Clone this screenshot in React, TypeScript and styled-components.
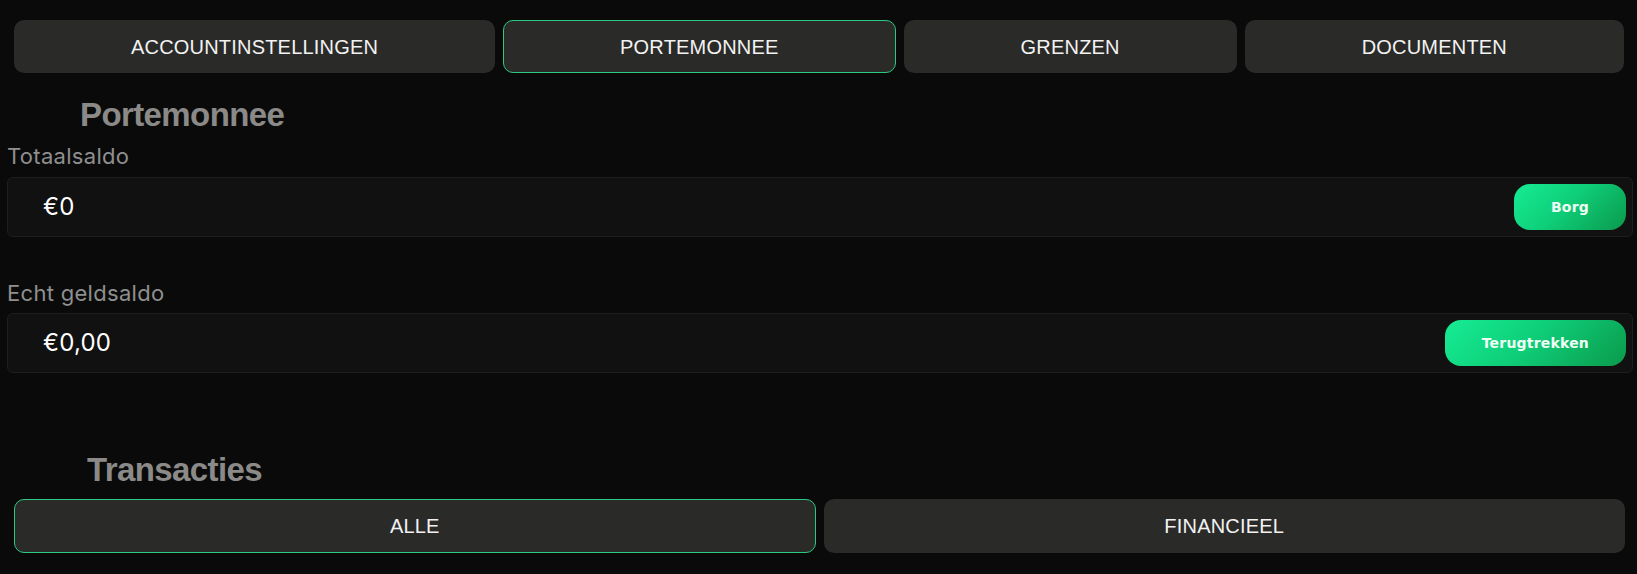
import styled, { createGlobalStyle, css } from 'styled-components';

const GlobalStyle = createGlobalStyle`
  html, body {
    margin: 0;
    padding: 0;
    background: #0a0a0a;
  }
  * {
    box-sizing: border-box;
  }
`;

const Page = styled.div`
  padding: 20px 4px 20px 7px;
  display: flex;
  flex-direction: column;
`;

const TabRow = styled.div<{ $top?: number; $right?: number }>`
  display: flex;
  gap: 8px;
  margin: ${p => p.$top ?? 0}px ${p => p.$right ?? 9}px 0 7px;
`;

const Tab = styled.button<{ $active?: boolean; $grow?: 'auto' | 'equal'; $height?: number }>`
  flex: ${p => (p.$grow === 'equal' ? '1 1 0' : '1 1 auto')};
  height: ${p => p.$height ?? 53}px;
  padding: 0;
  border-radius: 10px;
  border: 1px solid transparent;
  background: #2a2a29;
  color: #f2f2f2;
  font-family: 'Liberation Sans', Arial, sans-serif;
  font-size: 20px;
  line-height: 24px;
  letter-spacing: 0.2px;
  text-transform: uppercase;
  cursor: pointer;
  white-space: nowrap;

  ${p =>
    p.$active &&
    css`
      border-color: #2bc984;
    `}
`;

const Heading = styled.h2<{ $indent: number; $top: number }>`
  margin: ${p => p.$top}px 0 0 ${p => p.$indent}px;
  font-family: 'Liberation Sans', Arial, sans-serif;
  font-weight: 700;
  font-size: 33px;
  line-height: 40px;
  letter-spacing: -0.6px;
  color: #8b8a88;
`;

const Field = styled.div<{ $top: number; $gap: number }>`
  display: flex;
  flex-direction: column;
  gap: ${p => p.$gap}px;
  margin-top: ${p => p.$top}px;
`;

const Label = styled.div`
  font-family: Inter, 'Noto Sans', sans-serif;
  font-size: 22px;
  line-height: 26px;
  letter-spacing: 0.3px;
  color: #8f8f8f;
`;

const BalanceBox = styled.div`
  height: 60px;
  display: flex;
  align-items: center;
  justify-content: space-between;
  padding: 0 6px 0 35px;
  background: #111112;
  border: 1px solid #1e1e22;
  border-radius: 6px;
`;

const Amount = styled.span`
  font-family: Inter, 'Noto Sans', sans-serif;
  font-size: 24px;
  line-height: 30px;
  letter-spacing: 0.2px;
  color: #ffffff;
`;

const ActionButton = styled.button`
  height: 46px;
  padding: 0 37px;
  border: none;
  border-radius: 16px;
  background: linear-gradient(135deg, #16ec95 0%, #0fcf79 45%, #0a9a4c 100%);
  color: #effff6;
  font-family: 'DejaVu Sans', Verdana, sans-serif;
  font-weight: 700;
  font-size: 14px;
  letter-spacing: 0.2px;
  cursor: pointer;
`;

const accountTabs = ['Accountinstellingen', 'Portemonnee', 'Grenzen', 'Documenten'];

const balances = [
  { label: 'Totaalsaldo', amount: '€0', action: 'Borg', top: 8, gap: 8 },
  { label: 'Echt geldsaldo', amount: '€0,00', action: 'Terugtrekken', top: 43, gap: 7 },
];

export default function App() {
  return (
    <>
      <GlobalStyle />
      <Page>
        <TabRow>
          {accountTabs.map(tab => (
            <Tab key={tab} $active={tab === 'Portemonnee'}>
              {tab}
            </Tab>
          ))}
        </TabRow>

        <Heading $indent={73} $top={22}>Portemonnee</Heading>

        {balances.map(b => (
          <Field key={b.label} $top={b.top} $gap={b.gap}>
            <Label>{b.label}</Label>
            <BalanceBox>
              <Amount>{b.amount}</Amount>
              <ActionButton>{b.action}</ActionButton>
            </BalanceBox>
          </Field>
        ))}

        <Heading $indent={80} $top={77}>Transacties</Heading>

        <TabRow $top={9} $right={8}>
          <Tab $active $grow="equal" $height={54}>Alle</Tab>
          <Tab $grow="equal" $height={54}>Financieel</Tab>
        </TabRow>
      </Page>
    </>
  );
}
